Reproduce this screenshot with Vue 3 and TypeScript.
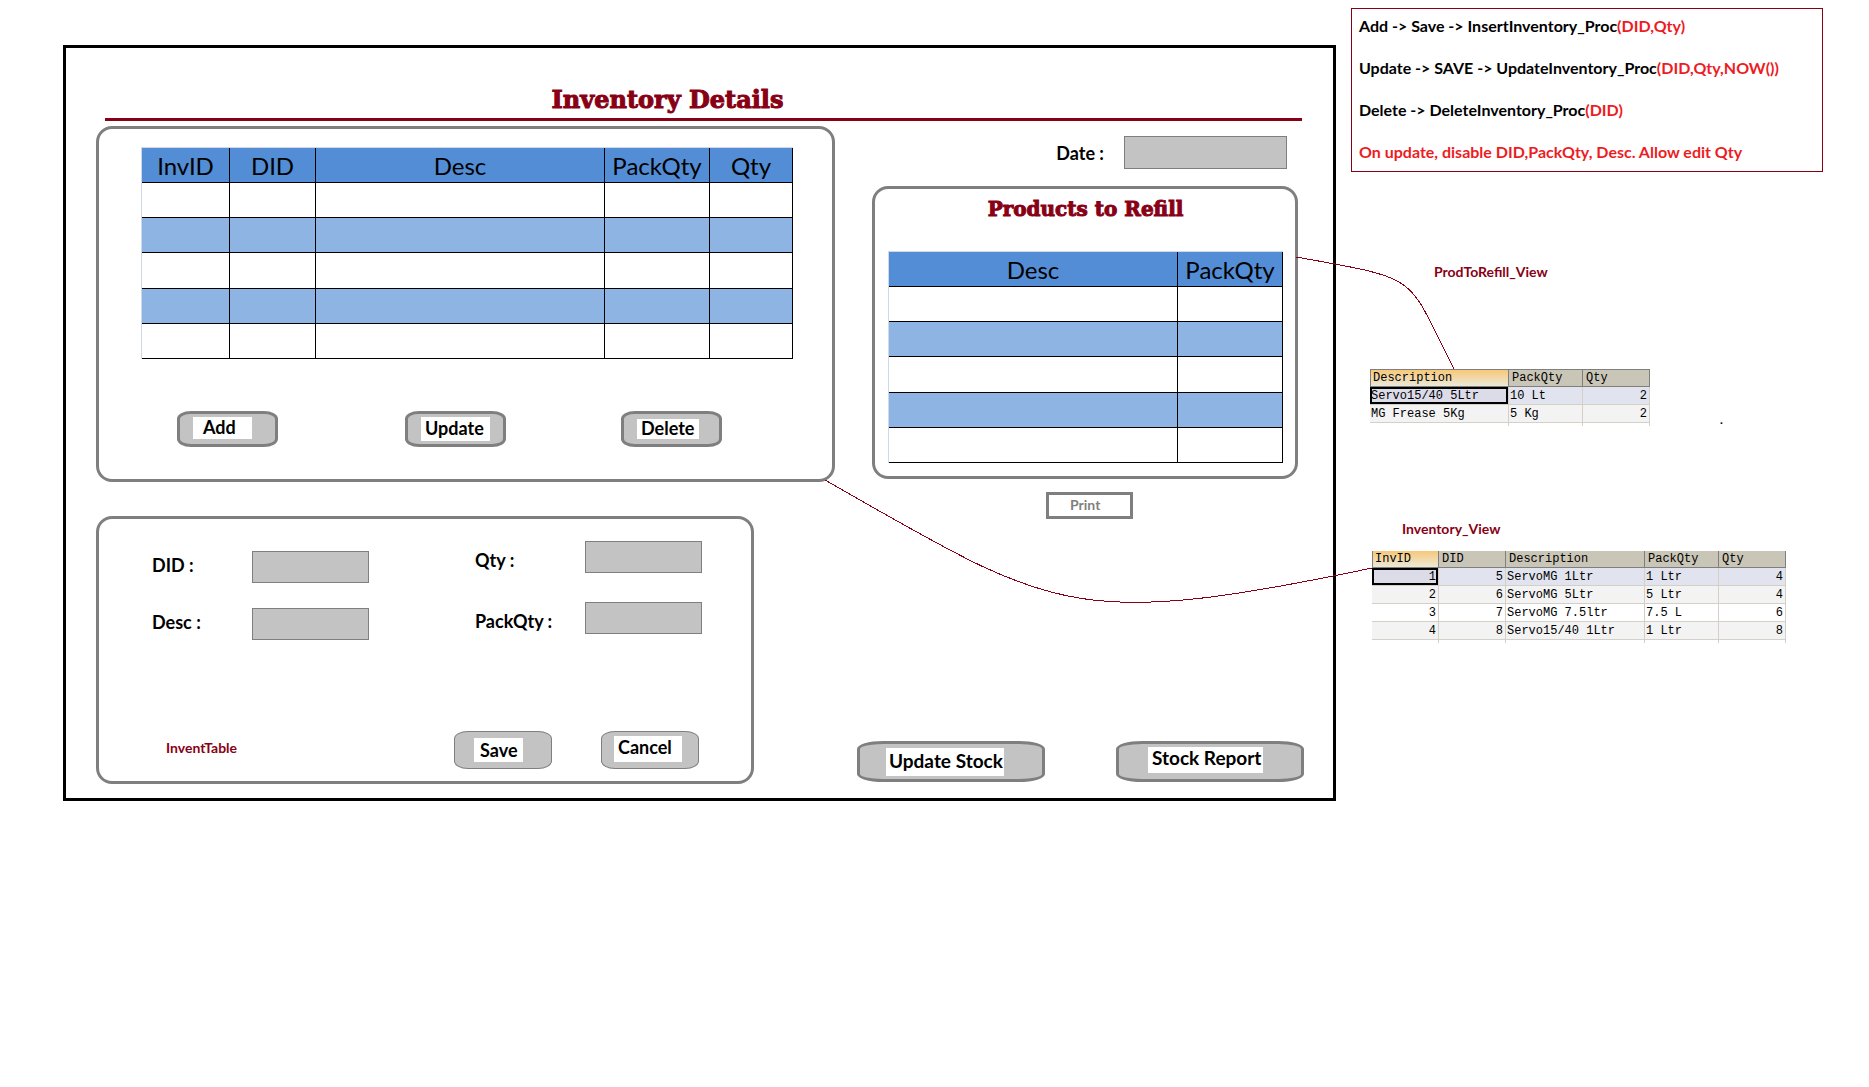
<script setup lang="ts">
import { ref } from 'vue'

interface Column {
  title: string
  width: number
}

interface Procedure {
  steps: string
  args: string
}

const inventoryColumns: Column[] = [
  { title: 'InvID', width: 88 },
  { title: 'DID', width: 86 },
  { title: 'Desc', width: 289 },
  { title: 'PackQty', width: 105 },
  { title: 'Qty', width: 83 },
]

const refillColumns: Column[] = [
  { title: 'Desc', width: 289 },
  { title: 'PackQty', width: 105 },
]

const procedures: Procedure[] = [
  { steps: 'Add -> Save -> InsertInventory_Proc', args: '(DID,Qty)' },
  { steps: 'Update -> SAVE -> UpdateInventory_Proc', args: '(DID,Qty,NOW())' },
  { steps: 'Delete -> DeleteInventory_Proc', args: '(DID)' },
  { steps: '', args: 'On update, disable DID,PackQty, Desc. Allow edit Qty' },
]

const refillView = [
  ['Servo15/40 5Ltr', '10 Lt', '2'],
  ['MG Frease 5Kg', '5 Kg', '2'],
]

const inventoryView = [
  ['1', '5', 'ServoMG 1Ltr', '1 Ltr', '4'],
  ['2', '6', 'ServoMG 5Ltr', '5 Ltr', '4'],
  ['3', '7', 'ServoMG 7.5ltr', '7.5 L', '6'],
  ['4', '8', 'Servo15/40 1Ltr', '1 Ltr', '8'],
]

const isNumber = (text: string): boolean => /^\d+$/.test(text)

const date = ref('')
const did = ref('')
const desc = ref('')
const qty = ref('')
const packQty = ref('')
</script>

<template>
  <div class="page">
    <main class="frame">
      <header class="title">
        <h1>Inventory Details</h1>
      </header>

      <div class="columns">
        <div class="left">
          <section class="panel inventory">
            <table class="grid">
              <colgroup>
                <col v-for="c in inventoryColumns" :key="c.title" :style="{ width: c.width + 'px' }" />
              </colgroup>
              <thead>
                <tr><th v-for="c in inventoryColumns" :key="c.title">{{ c.title }}</th></tr>
              </thead>
              <tbody>
                <tr v-for="r in 5" :key="r"><td v-for="c in inventoryColumns" :key="c.title"></td></tr>
              </tbody>
            </table>
            <div class="actions">
              <button type="button" class="btn"><span class="patch add">Add</span></button>
              <button type="button" class="btn"><span class="patch update">Update</span></button>
              <button type="button" class="btn"><span class="patch delete">Delete</span></button>
            </div>
          </section>

          <form class="panel editor" @submit.prevent>
            <div class="fields">
              <div class="stack first">
                <div class="field"><label for="did">DID :</label><input id="did" v-model="did" type="text" /></div>
                <div class="field"><label for="desc">Desc :</label><input id="desc" v-model="desc" type="text" /></div>
              </div>
              <div class="stack second">
                <div class="field"><label for="qty">Qty :</label><input id="qty" v-model="qty" type="text" /></div>
                <div class="field"><label for="pack">PackQty :</label><input id="pack" v-model="packQty" type="text" /></div>
              </div>
            </div>
            <div class="editor-foot">
              <span class="caption">InventTable</span>
              <button type="submit" class="btn thin"><span class="patch save">Save</span></button>
              <button type="button" class="btn thin"><span class="patch cancel">Cancel</span></button>
            </div>
          </form>
        </div>

        <div class="right">
          <div class="date">
            <label for="date">Date :</label>
            <input id="date" v-model="date" type="text" />
          </div>
          <section class="panel refill">
            <h2>Products to Refill</h2>
            <table class="grid">
              <colgroup>
                <col v-for="c in refillColumns" :key="c.title" :style="{ width: c.width + 'px' }" />
              </colgroup>
              <thead>
                <tr><th v-for="c in refillColumns" :key="c.title">{{ c.title }}</th></tr>
              </thead>
              <tbody>
                <tr v-for="r in 5" :key="r"><td v-for="c in refillColumns" :key="c.title"></td></tr>
              </tbody>
            </table>
          </section>
          <button type="button" class="print">Print</button>
          <div class="stock">
            <button type="button" class="btn wide"><span class="patch stock-update">Update Stock</span></button>
            <button type="button" class="btn wide"><span class="patch stock-report">Stock Report</span></button>
          </div>
        </div>
      </div>
    </main>

    <aside class="notes">
      <div class="procedures">
        <p v-for="p in procedures" :key="p.args">{{ p.steps }}<em>{{ p.args }}</em></p>
      </div>

      <h3 class="caption refill-caption">ProdToRefill_View</h3>
      <div class="result-row">
        <table class="result refill-result">
          <colgroup><col class="w-desc" /><col class="w-pack" /><col class="w-num" /></colgroup>
          <thead><tr><th>Description</th><th>PackQty</th><th>Qty</th></tr></thead>
          <tbody>
            <tr v-for="row in refillView" :key="row[0]">
              <td v-for="(cell, i) in row" :key="i" :class="{ num: isNumber(cell) }">{{ cell }}</td>
            </tr>
          </tbody>
          <tfoot><tr><td></td><td></td><td></td></tr></tfoot>
        </table>
        <span class="dot">.</span>
      </div>

      <h3 class="caption inventory-caption">Inventory_View</h3>
      <table class="result inventory-result">
        <colgroup>
          <col class="w-num" /><col class="w-num" /><col class="w-desc" /><col class="w-pack" /><col class="w-num" />
        </colgroup>
        <thead><tr><th>InvID</th><th>DID</th><th>Description</th><th>PackQty</th><th>Qty</th></tr></thead>
        <tbody>
          <tr v-for="row in inventoryView" :key="row[0]">
            <td v-for="(cell, i) in row" :key="i" :class="{ num: isNumber(cell) }">{{ cell }}</td>
          </tr>
        </tbody>
        <tfoot><tr><td></td><td></td><td></td><td></td><td></td></tr></tfoot>
      </table>
    </aside>

    <svg class="links" viewBox="0 0 1869 802" preserveAspectRatio="none" aria-hidden="true">
      <path d="M1296 257C1425 280 1405 274 1454 369" />
      <path d="M825 480C1052 609 1068 632 1372 568" />
    </svg>
  </div>
</template>

<style>
body {
  margin: 0;
  background: #fff;
}
</style>

<style scoped>
.page {
  position: relative;
  display: grid;
  grid-template-columns: minmax(0, 1273fr) minmax(0, 472fr);
  column-gap: 15px;
  align-items: start;
  padding: 8px 46px 0 63px;
  color: #000;
  font-family: Lato, "Open Sans", sans-serif;
  font-size: 18px;
  font-weight: 700;
}
.page *,
.page {
  box-sizing: border-box;
}
h1,
h2,
h3,
p {
  margin: 0;
}
.links {
  position: absolute;
  inset: 0 0 auto;
  width: 100%;
  height: 802px;
  pointer-events: none;
}
.links path {
  fill: none;
  stroke: #880015;
  stroke-width: 1;
  vector-effect: non-scaling-stroke;
  shape-rendering: crispEdges;
}

.frame {
  margin-top: 37px;
  padding-bottom: 14px;
  border: 3px solid #000;
}
.title {
  margin: 0 31px 5px 39px;
  padding: 37px 72px 3px 0;
  border-bottom: 3px solid #880015;
}
h1,
h2 {
  color: #880015;
  font-family: Broadway, "DejaVu Serif", serif;
  font-weight: 700;
  text-align: center;
  -webkit-text-stroke: 1px #880015;
}
h1 {
  font-size: 24px;
  line-height: 30px;
}
h2 {
  font-size: 20px;
  line-height: 24px;
}
.columns {
  display: grid;
  grid-template-columns: minmax(0, 739fr) minmax(0, 426fr);
  column-gap: 37px;
  padding: 0 35px 0 30px;
}
.left,
.right {
  display: flex;
  flex-direction: column;
}
.left {
  gap: 34px;
}
.panel {
  border: 3px solid #7f7f7f;
  border-radius: 16px;
}
.inventory {
  padding: 18px 39px 32px 42px;
}

.grid {
  width: 100%;
  table-layout: fixed;
  border-collapse: separate;
  border-spacing: 0;
  border: solid #d0d7e5;
  border-width: 1px 0 0 1px;
}
.grid th,
.grid td {
  height: 35px;
  padding: 0;
  border: solid #000;
  border-width: 0 1px 1px 0;
}
.grid th {
  padding-bottom: 2px;
  background: #538dd5;
  font-size: 24px;
  font-weight: 400;
  line-height: 28px;
  vertical-align: bottom;
}
.grid tbody tr:nth-child(3) td {
  height: 36px;
}
.grid tbody tr:nth-child(even) td {
  background: #8db4e2;
}

.btn {
  display: flex;
  align-items: center;
  height: 36px;
  padding: 0 13px;
  background: #c3c3c3;
  border: 3px solid #7f7f7f;
  border-radius: 14px / 8px;
  color: #000;
  font: inherit;
}
.patch {
  padding: 0 0 2px 4px;
  background: #fff;
  line-height: 22px;
  text-align: left;
  white-space: nowrap;
}
.actions {
  display: grid;
  grid-template-columns: 228fr 216fr 101fr;
  margin-top: 52px;
  padding: 0 71px 0 36px;
}
.actions .btn {
  width: 101px;
}
.add {
  width: 59px;
  margin-bottom: 2px;
  padding-left: 10px;
  line-height: 20px;
}
.update {
  width: 69px;
}
.delete {
  width: 62px;
  line-height: 18px;
}

.editor {
  margin-right: 81px;
  padding: 0 49px 12px 53px;
}
.fields {
  display: flex;
  justify-content: space-between;
}
.stack {
  display: flex;
  flex-direction: column;
}
.first {
  gap: 25px;
  padding-top: 32px;
}
.second {
  gap: 29px;
  padding-top: 22px;
}
.field {
  display: flex;
  align-items: center;
}
.first label {
  width: 100px;
  padding-bottom: 4px;
}
.second label {
  width: 110px;
  padding-top: 6px;
}
label {
  line-height: 24px;
}
input {
  width: 117px;
  height: 32px;
  padding: 0 6px;
  background: #c3c3c3;
  border: 1px solid #7f7f7f;
  border-radius: 0;
  font: inherit;
}
.caption {
  color: #880015;
  font-size: 14px;
  font-weight: 700;
  line-height: 16px;
}
.editor-foot {
  display: flex;
  align-items: center;
  margin-top: 91px;
  padding-left: 14px;
}
.editor-foot .caption {
  width: 288px;
  padding-bottom: 4px;
}
.thin {
  width: 98px;
  height: 38px;
  margin-right: 49px;
  padding: 0 12px;
  border-width: 1px;
}
.thin + .thin {
  margin-right: 0;
}
.save {
  width: 49px;
  margin-left: 7px;
  padding: 0 0 0 6px;
  line-height: 24px;
}
.cancel {
  width: 68px;
  margin-bottom: 2px;
  padding-bottom: 4px;
}

.date {
  display: flex;
  justify-content: flex-end;
  align-items: center;
  gap: 20px;
  padding: 10px 11px 17px 0;
}
.date input {
  width: 163px;
  height: 33px;
}
.refill {
  padding: 8px 12px 13px 13px;
}
.refill h2 {
  margin-bottom: 30px;
}
.print {
  width: 87px;
  height: 27px;
  margin: 13px 0 0 174px;
  padding: 0 0 2px 21px;
  background: #fff;
  border: 3px solid #7f7f7f;
  color: #7f7f7f;
  font: inherit;
  font-size: 14px;
  line-height: 16px;
  text-align: left;
}
.stock {
  display: flex;
  justify-content: space-between;
  margin: auto -6px 2px -15px;
}
.wide {
  width: 188px;
  height: 41px;
  padding: 0 26px;
  border-radius: 26px / 8px;
  font-size: 19px;
}
.stock-update {
  width: 118px;
  padding-left: 3px;
  line-height: 26px;
}
.stock-report {
  width: 115px;
  margin: 0 0 4px 3px;
  padding-bottom: 4px;
}

.procedures {
  padding: 4px 7px 6px;
  border: 1px solid #880015;
}
.procedures p {
  padding-bottom: 16px;
  font-size: 16px;
  line-height: 26px;
  white-space: nowrap;
}
.procedures p:last-child {
  padding-bottom: 0;
}
.procedures em {
  color: #ed1c24;
  font-style: normal;
}
.refill-caption {
  margin: 92px 0 89px 83px;
}
.inventory-caption {
  margin: 95px 0 14px 51px;
}
.result-row {
  display: flex;
  align-items: flex-end;
  margin-left: 19px;
}
.dot {
  margin-left: 70px;
  font-size: 12px;
  line-height: 12px;
}

.result {
  table-layout: fixed;
  border-collapse: separate;
  border-spacing: 0;
  font-family: "Liberation Mono", monospace;
  font-size: 12px;
  font-weight: 400;
  line-height: 16px;
}
.refill-result {
  width: 280px;
  border-top: 1px solid #7f7f7f;
}
.inventory-result {
  width: 414px;
  margin-left: 21px;
}
.w-desc {
  width: 139px;
}
.w-pack {
  width: 74px;
}
.w-num {
  width: 67px;
}
.result th,
.result td {
  height: 18px;
  padding: 0 2px 0 1px;
  text-align: left;
  white-space: nowrap;
}
.result th {
  height: 17px;
  padding-left: 3px;
  background: #cac6b7;
  border: solid #7f7f7f;
  border-width: 0 1px 1px 0;
  font-weight: 400;
}
.result th:first-child {
  background: linear-gradient(#f7c878, #ece9d8);
  border-left-width: 1px;
  padding-left: 2px;
}
.result td {
  border: solid #d4d0c8;
  border-width: 0 1px 1px 0;
}
.result .num {
  text-align: right;
}
.result tbody tr:nth-child(odd) td {
  background: #fff;
}
.result tbody tr:nth-child(even) td {
  background: #f3f3f3;
}
.result tbody tr:first-child td {
  background: #e1e4ee;
}
.result tbody tr:first-child td:first-child {
  background: #dcdbe8;
  box-shadow: inset 0 0 0 2px #000;
}
.result tfoot td {
  height: 3px;
  border-bottom: 0;
}
</style>
